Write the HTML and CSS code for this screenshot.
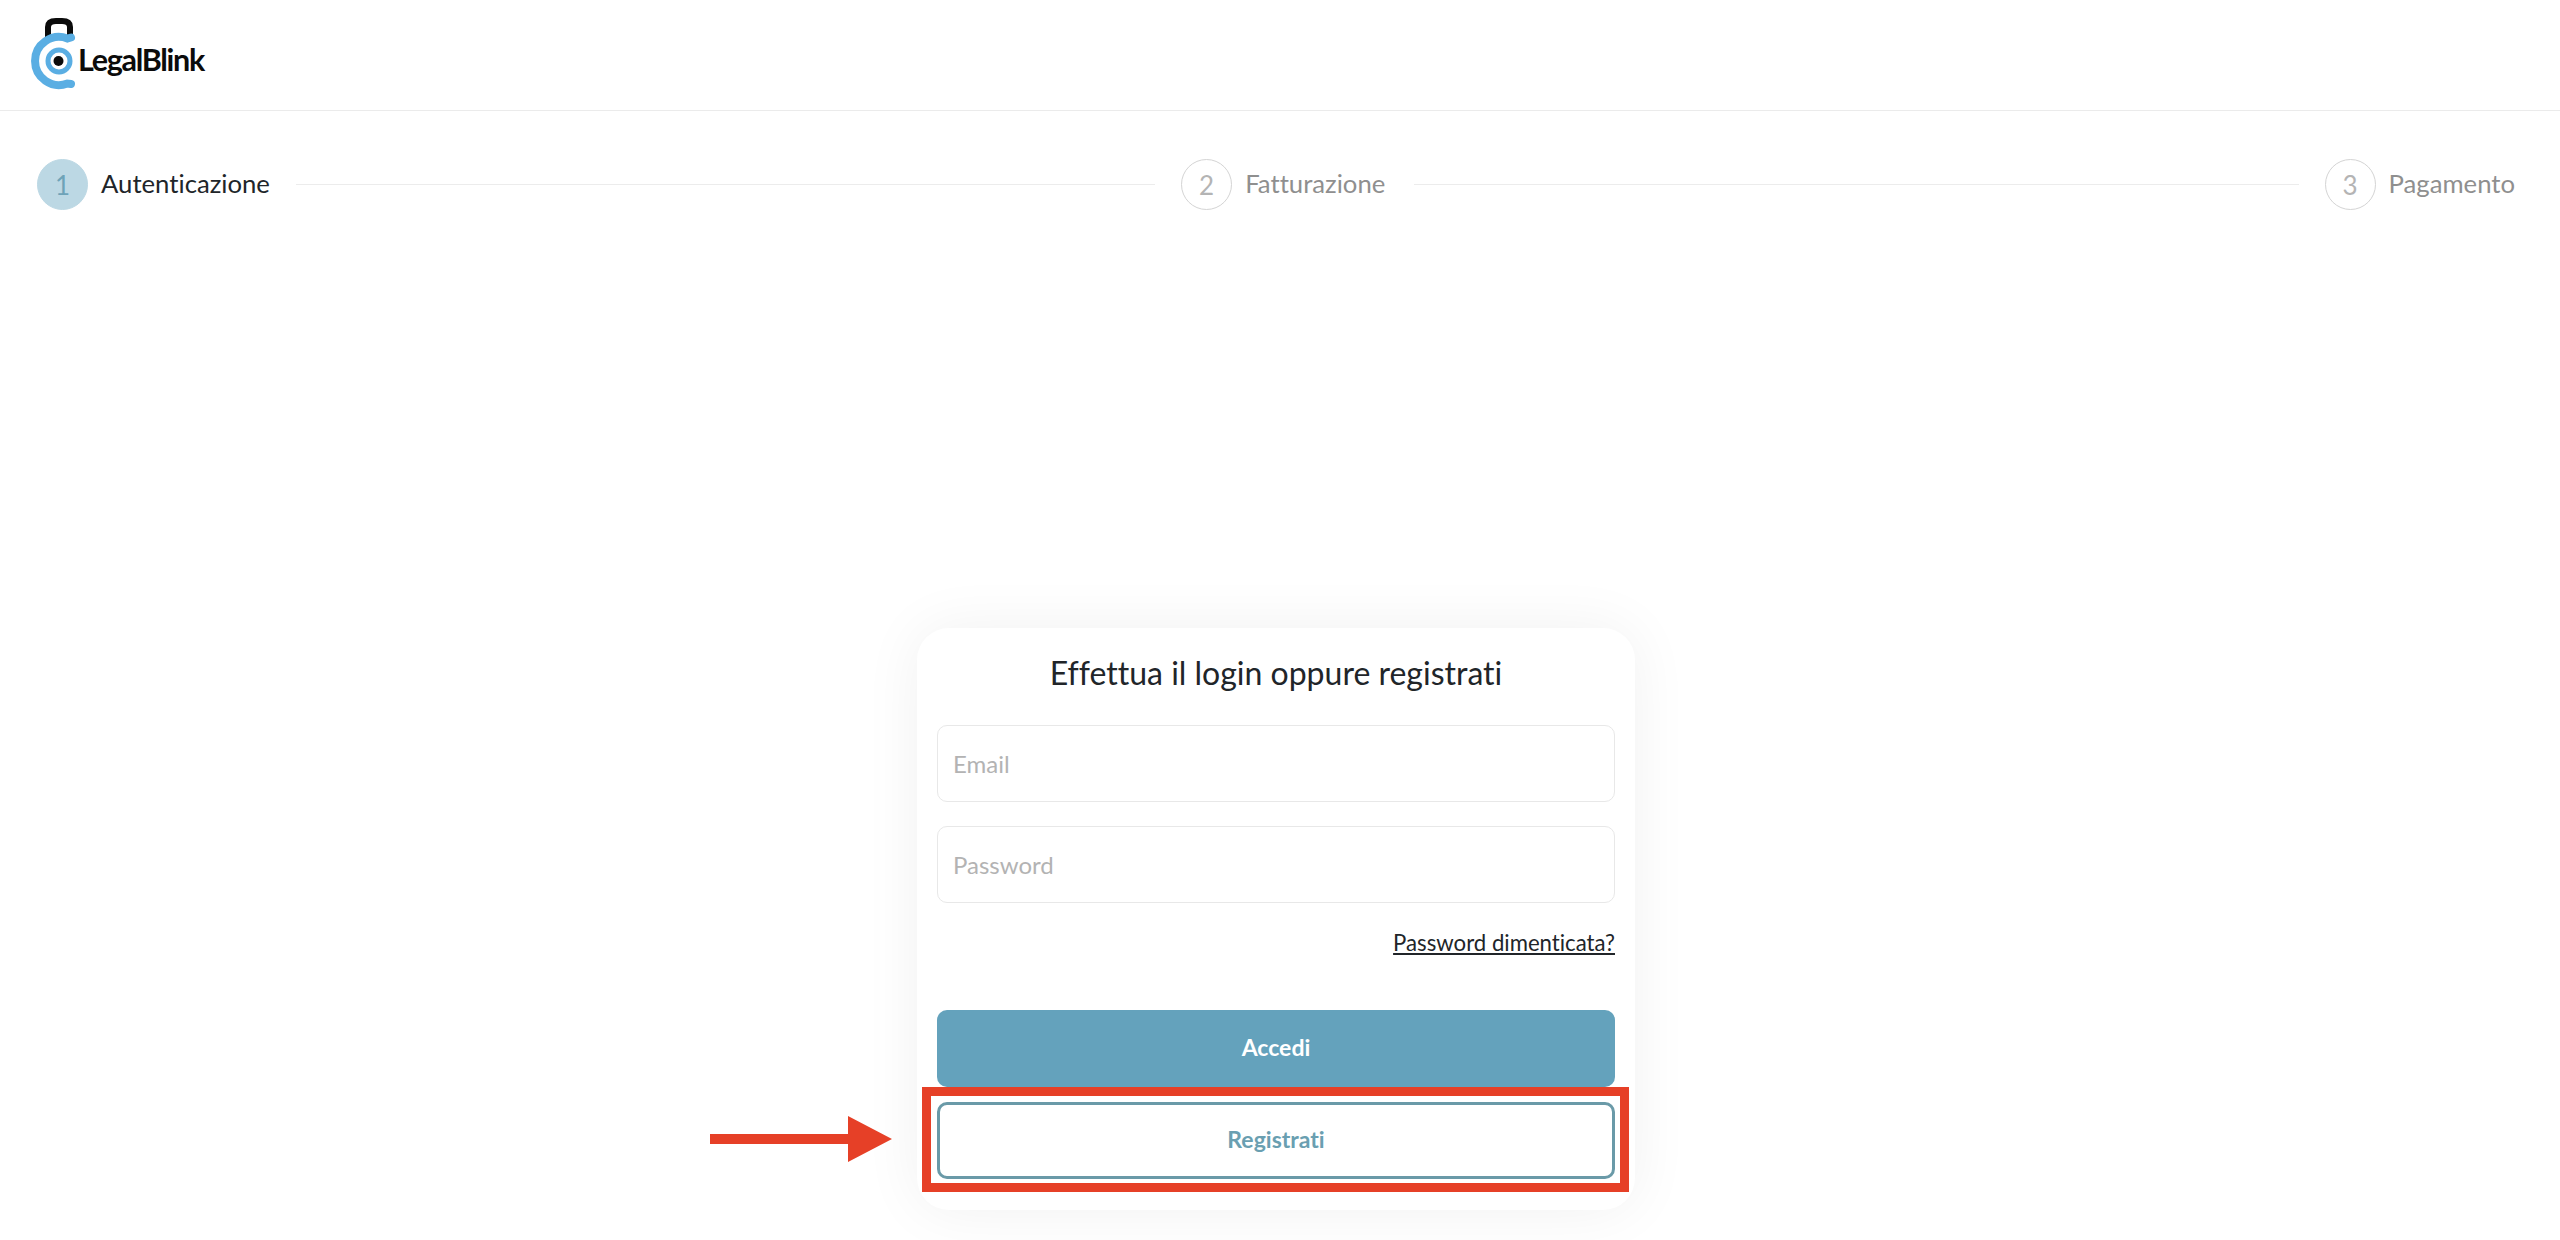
FILE: index.html
```html
<!DOCTYPE html>
<html lang="en">
<head>
  <meta charset="UTF-8" />
  <meta name="viewport" content="width=device-width, initial-scale=1.0"/>
  <title>LegalBlink - Autenticazione</title>
  <link rel="stylesheet" href="styles.css">
</head>
<body>
  <header class="topbar">
    <a class="logo" href="#">
      <svg class="logo-mark" width="50" height="80" viewBox="0 0 50 80">
        <path d="M18 27 V17 Q18 11 26 11 H32 Q40 11 40 17 V27" fill="none" stroke="#0b0b0b" stroke-width="6"/>
        <path d="M41 27.5 L37.4 28.5 A24 24 0 1 0 37.4 73.5 L41 74" fill="none" stroke="#5aaee3" stroke-width="8" stroke-linecap="round"/>
        <circle cx="29" cy="51" r="11" fill="#fff" stroke="#5aaee3" stroke-width="5"/>
        <circle cx="28.5" cy="51" r="5" fill="#0b0b0b"/>
      </svg>
      <span class="logo-text">LegalBlink</span>
    </a>
  </header>

  <nav class="stepper">
    <div class="step active">
      <span class="step-num">1</span>
      <span class="step-label">Autenticazione</span>
    </div>
    <div class="step-line first"></div>
    <div class="step">
      <span class="step-num">2</span>
      <span class="step-label">Fatturazione</span>
    </div>
    <div class="step-line second"></div>
    <div class="step">
      <span class="step-num">3</span>
      <span class="step-label">Pagamento</span>
    </div>
  </nav>

  <main class="content">
    <div class="card">
      <h1>Effettua il login oppure registrati</h1>
      <input class="field" type="text" placeholder="Email">
      <input class="field" type="password" placeholder="Password">
      <div class="forgot"><a href="#">Password dimenticata?</a></div>
      <button class="btn btn-primary">Accedi</button>
      <button class="btn btn-outline">Registrati</button>

      <!-- annotation drawn over the screenshot -->
      <div class="mark-box"></div>
      <svg class="mark-arrow" width="182" height="46" viewBox="0 0 182 46">
        <path d="M0 18 H138 V0 L182 23 L138 46 V28 H0 Z" fill="#e64027"/>
      </svg>
    </div>
  </main>
</body>
</html>
```

FILE: styles.css
```css
* {
  box-sizing: border-box;
}
body {
  margin: 0;
  height: 1240px;
  overflow: hidden;
  font-family: 'Lato', sans-serif;
  font-variant-ligatures: none;
  background: #fff;
  color: #212529;
}
.topbar {
  height: 111px;
  padding-left: 30px;
  padding-top: 10px;
  border-bottom: 1px solid #ebebeb;
}
.logo {
  display: flex;
  align-items: center;
  width: max-content;
  text-decoration: none;
}
.logo-mark {
  display: block;
}
.logo-text {
  margin-left: -2px;
  margin-top: 17px;
  font-size: 30.5px;
  font-weight: 700;
  letter-spacing: -1.3px;
  color: #0b0b0b;
}
.stepper {
  display: flex;
  align-items: center;
  padding: 48px 45px 0 37px;
}
.step {
  display: flex;
  align-items: center;
  gap: 13px;
}
.step-num {
  display: flex;
  align-items: center;
  justify-content: center;
  width: 51px;
  height: 51px;
  border: 1px solid #d4d4d4;
  border-radius: 50%;
  font-size: 26px;
  color: #b4b4b4;
}
.step-label {
  margin-top: -3px;
  font-size: 25.7px;
  color: #8f8f8f;
}
.step.active .step-num {
  background: #bcd8e4;
  border-color: #bcd8e4;
  color: #6ea3b8;
}
.step.active .step-label {
  color: #212529;
}
.step-line {
  height: 1px;
  margin: 0 26px;
  background: #ececec;
}
.step-line.first {
  flex: 861;
}
.step-line.second {
  flex: 886;
  margin-left: 29px;
}
.content {
  display: flex;
  justify-content: center;
  padding-top: 418px;
  padding-right: 8px;
}
.card {
  position: relative;
  width: 718px;
  height: 582px;
  padding: 0 20px;
  background: #fff;
  border-radius: 32px;
  box-shadow: 0 0 60px rgba(0, 0, 0, 0.06);
}
.card h1 {
  margin: 0;
  padding: 23px 0 31px;
  font-size: 32px;
  font-weight: 400;
  line-height: 43px;
  text-align: center;
  color: #212529;
}
.field {
  display: block;
  width: 100%;
  height: 77px;
  margin-bottom: 24px;
  padding: 0 15px;
  border: 1px solid #e8e8e8;
  border-radius: 10px;
  font-family: inherit;
  font-size: 24px;
  font-variant-ligatures: none;
  background: #fff;
}
.field::placeholder {
  color: #b3b3b3;
}
.forgot {
  text-align: right;
  font-size: 22.2px;
  line-height: 32px;
}
.forgot a {
  color: #212529;
}
.btn {
  display: block;
  width: 100%;
  height: 77px;
  padding-bottom: 4px;
  border-radius: 10px;
  font-family: inherit;
  font-size: 23px;
  font-weight: 700;
  font-variant-ligatures: none;
  cursor: pointer;
}
.btn-primary {
  margin-top: 51px;
  border: none;
  background: #64a2bc;
  color: #fff;
}
.btn-outline {
  margin-top: 15px;
  border: 3px solid #6a9aa8;
  background: #fff;
  color: #6a9fb1;
}
.mark-box {
  position: absolute;
  left: 5px;
  top: 459px;
  width: 707px;
  height: 105px;
  border: 9px solid #e64027;
}
.mark-arrow {
  position: absolute;
  left: -207px;
  top: 488px;
}
```
